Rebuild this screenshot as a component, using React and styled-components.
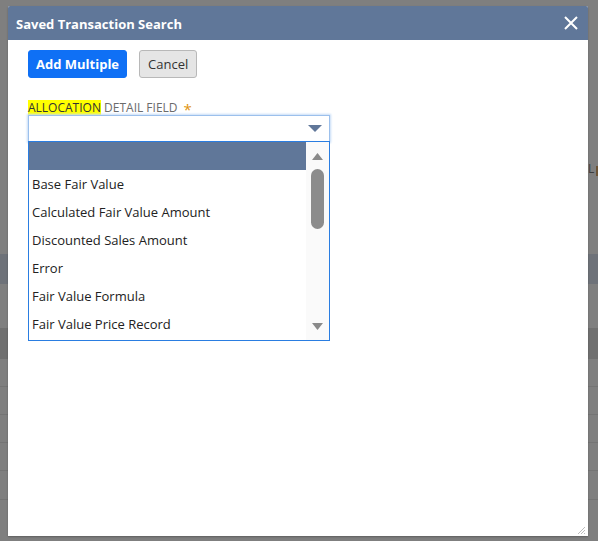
import React from "react";
import styled, { createGlobalStyle } from "styled-components";

const Global = createGlobalStyle`
  html, body { margin: 0; padding: 0; }
  body {
    width: 598px; height: 541px; overflow: hidden;
    background: #7f7f7f;
    font-family: "Open Sans", "Liberation Sans", sans-serif;
  }
`;

const Screen = styled.div`
  position: relative;
  width: 598px;
  height: 541px;
  overflow: hidden;
  background: #7f7f7f;
`;

/* dimmed page behind the modal */
const BehindPage = styled.div`
  display: flex;
  flex-direction: column;
  width: 100%;
  height: 100%;
`;

const BehindRow = styled.div`
  height: ${(p) => p.$h}px;
  flex: none;
  background: ${(p) => p.$bg || "transparent"};
  border-bottom: ${(p) => (p.$line ? "1px solid #747474" : "none")};
  display: flex;
  justify-content: flex-start;
  align-items: flex-end;
  padding-left: 588px;
  box-sizing: border-box;
`;

const GhostText = styled.span`
  font-family: "Open Sans", sans-serif;
  font-size: 12px;
  color: #3c3c3c;
  line-height: 14px;
  margin-bottom: 4px;
  padding-right: 2px;
  border-right: 2px solid #6b5335;
  height: 10px;
  display: flex;
  align-items: flex-end;
`;

const Dialog = styled.div`
  position: absolute;
  left: 8px;
  top: 6px;
  width: 580px;
  height: 530px;
  background: #fff;
  border-radius: 2px 2px 0 0;
  box-shadow: 0 1px 2px rgba(0, 0, 0, 0.25);
  display: flex;
  flex-direction: column;
`;

const Header = styled.div`
  height: 34px;
  flex: none;
  background: #607799;
  display: flex;
  align-items: center;
  justify-content: space-between;
  padding: 0 9px 0 8px;
  border-radius: 2px 2px 0 0;
`;

const Title = styled.h1`
  margin: 0;
  font-size: 13px;
  font-weight: 700;
  color: #fff;
  font-family: "Open Sans", sans-serif;
  padding-top: 1px;
`;

const CloseButton = styled.button`
  width: 16px;
  height: 16px;
  padding: 0;
  border: 0;
  background: none;
  display: flex;
  align-items: center;
  justify-content: center;
  cursor: pointer;
`;

const Body = styled.div`
  flex: 1;
  position: relative;
  padding: 10px 20px;
  display: flex;
  flex-direction: column;
`;

const Toolbar = styled.div`
  display: flex;
  gap: 12px;
`;

const Button = styled.button`
  height: 28px;
  padding: 0 ${(p) => (p.$primary ? 7 : 8)}px;
  border-radius: 3px;
  font-family: "Open Sans", sans-serif;
  font-size: 13px;
  font-weight: ${(p) => (p.$primary ? 700 : 400)};
  color: ${(p) => (p.$primary ? "#fff" : "#333")};
  background: ${(p) => (p.$primary ? "#0f70f5" : "#e5e5e5")};
  border: 1px solid ${(p) => (p.$primary ? "#0f70f5" : "#b8b8b8")};
`;

const Field = styled.div`
  margin-top: 22px;
  width: 302px;
  display: flex;
  flex-direction: column;
`;

const Label = styled.label`
  font-size: 12px;
  line-height: 15px;
  color: #6b6b6b;
  text-transform: uppercase;
  display: flex;
  align-items: center;
  white-space: pre;
`;

const Highlight = styled.mark`
  background: #ffff00;
  color: #333;
`;

const Required = styled.span`
  color: #e0940f;
  font-size: 15px;
  margin-left: 6px;
  line-height: 12px;
  position: relative;
  top: 1px;
`;

const SelectBox = styled.div`
  height: 25px;
  border: 1px solid #9cc0ec;
  box-shadow: 0 0 2px 1px #c6dcf7;
  background: #fff;
  display: flex;
  align-items: center;
  justify-content: flex-end;
  padding-right: 7px;
`;

const List = styled.div`
  position: relative;
  margin-top: -1px;
  height: 198px;
  border: 1px solid #2a7de1;
  display: flex;
  background: #fff;
`;

const Options = styled.ul`
  flex: 1;
  margin: 0;
  padding: 0;
  list-style: none;
  overflow: hidden;
`;

const Option = styled.li`
  height: 28px;
  line-height: 28px;
  padding-left: 3px;
  font-size: 13px;
  color: #222;
  background: ${(p) => (p.$selected ? "#607799" : "transparent")};
  white-space: nowrap;
`;

const Scrollbar = styled.div`
  width: 23px;
  flex: none;
  background: #fafafa;
  display: flex;
  flex-direction: column;
  align-items: center;
  padding: 11px 0 10px;
  box-sizing: border-box;
`;

const Thumb = styled.div`
  width: 13px;
  height: 60px;
  border-radius: 7px;
  background: #8c8c8c;
  margin-top: 9px;
`;

const Spacer = styled.div`
  flex: 1;
`;

const Grip = styled.div`
  position: absolute;
  right: 3px;
  bottom: 2px;
  width: 8px;
  height: 8px;
  display: flex;
`;

const options = [
  "",
  "Base Fair Value",
  "Calculated Fair Value Amount",
  "Discounted Sales Amount",
  "Error",
  "Fair Value Formula",
  "Fair Value Price Record",
];

export default function App() {
  return (
    <>
      <Global />
      <Screen>
        <BehindPage>
          <BehindRow $h={160} />
          <BehindRow $h={20}>
            <GhostText>L</GhostText>
          </BehindRow>
          <BehindRow $h={74} />
          <BehindRow $h={30} $bg="#6e7279" />
          <BehindRow $h={44} />
          <BehindRow $h={31} $bg="#707070" />
          <BehindRow $h={28} $line />
          <BehindRow $h={28} $line />
          <BehindRow $h={28} $line />
          <BehindRow $h={28} $line />
          <BehindRow $h={29} $line />
        </BehindPage>
        <Dialog>
          <Header>
            <Title>Saved Transaction Search</Title>
            <CloseButton aria-label="Close">
              <svg width="14" height="14" viewBox="0 0 14 14">
                <path d="M1 1 L13 13 M13 1 L1 13" stroke="#fff" strokeWidth="2" />
              </svg>
            </CloseButton>
          </Header>
          <Body>
            <Toolbar>
              <Button $primary>Add Multiple</Button>
              <Button>Cancel</Button>
            </Toolbar>
            <Field>
              <Label>
                <Highlight>ALLOCATION</Highlight> DETAIL FIELD<Required>*</Required>
              </Label>
              <SelectBox>
                <svg width="14" height="7" viewBox="0 0 14 7">
                  <path d="M0 0 H14 L7 7 Z" fill="#607799" />
                </svg>
              </SelectBox>
              <List>
                <Options>
                  {options.map((o, i) => (
                    <Option key={i} $selected={i === 0}>
                      {o}
                    </Option>
                  ))}
                </Options>
                <Scrollbar>
                  <svg width="11" height="7" viewBox="0 0 11 7">
                    <path d="M5.5 0 L11 7 H0 Z" fill="#8a8a8a" />
                  </svg>
                  <Thumb />
                  <Spacer />
                  <svg width="11" height="7" viewBox="0 0 11 7">
                    <path d="M0 0 H11 L5.5 7 Z" fill="#8a8a8a" />
                  </svg>
                </Scrollbar>
              </List>
            </Field>
            <Grip>
              <svg width="8" height="8" viewBox="0 0 8 8">
                <path d="M8 1 L1 8 M8 4 L4 8 M8 7 L7 8" stroke="#bdbdbd" strokeWidth="1" />
              </svg>
            </Grip>
          </Body>
        </Dialog>
      </Screen>
    </>
  );
}
